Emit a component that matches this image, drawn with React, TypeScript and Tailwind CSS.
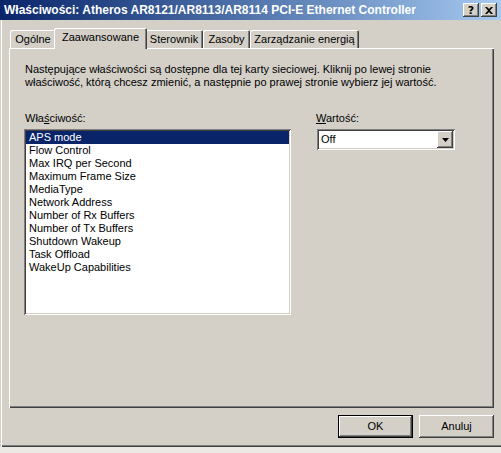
import React from "react";

const raised =
  "shadow-[inset_-1px_-1px_#404040,inset_1px_1px_#ffffff,inset_-2px_-2px_#808080,inset_2px_2px_#d4d0c8]";
const sunken =
  "shadow-[inset_1px_1px_#808080,inset_-1px_-1px_#ffffff,inset_2px_2px_#404040,inset_-2px_-2px_#d4d0c8]";

const tabs = [
  { label: "Ogólne", w: "w-[46px]" },
  { label: "Zaawansowane", w: "w-[93px]", active: true },
  { label: "Sterownik", w: "w-[58px]" },
  { label: "Zasoby", w: "w-[47px]" },
  { label: "Zarządzanie energią", w: "w-[109px]" },
];

const properties = [
  "APS mode",
  "Flow Control",
  "Max IRQ per Second",
  "Maximum Frame Size",
  "MediaType",
  "Network Address",
  "Number of Rx Buffers",
  "Number of Tx Buffers",
  "Shutdown Wakeup",
  "Task Offload",
  "WakeUp Capabilities",
];

function CaptionButton({ children }: { children: React.ReactNode }) {
  return (
    <div className={`w-[16px] h-[14px] bg-[#d4d0c8] flex items-center justify-center ${raised}`}>
      {children}
    </div>
  );
}

function Tab({ label, w, active }: { label: string; w: string; active?: boolean }) {
  if (active) {
    return (
      <div
        className={`relative z-10 -mx-[2px] -mb-px h-[21px] ${w} bg-[#d4d0c8] rounded-t-[2px] flex items-center justify-center pb-[2px] shadow-[inset_1px_1px_#ffffff,inset_-1px_0_#404040,inset_-2px_0_#808080]`}
      >
        {label}
      </div>
    );
  }
  return (
    <div
      className={`h-[18px] ${w} bg-[#d4d0c8] rounded-t-[2px] flex items-center justify-center shadow-[inset_1px_1px_#ffffff,inset_-1px_0_#404040,inset_-2px_0_#808080]`}
    >
      {label}
    </div>
  );
}

function PushButton({ label, isDefault }: { label: string; isDefault?: boolean }) {
  if (isDefault) {
    return (
      <div className="w-[75px] h-[23px] border border-black">
        <div className={`w-full h-full bg-[#d4d0c8] flex items-center justify-center ${raised}`}>
          {label}
        </div>
      </div>
    );
  }
  return (
    <div className={`w-[75px] h-[23px] bg-[#d4d0c8] flex items-center justify-center ${raised}`}>
      {label}
    </div>
  );
}

export default function App() {
  return (
    <div className="w-[501px] h-[453px] bg-[#ece9e4] text-[11px] leading-[13px] text-black font-['Liberation_Sans',Arial,sans-serif] select-none">
      <div className="h-[447px] bg-[#d4d0c8] flex flex-col shadow-[inset_1px_0_#d4d0c8,inset_2px_0_#ffffff,inset_0_-1px_#404040,inset_0_-2px_#808080]">
        {/* caption */}
        <div className="h-[20px] flex items-center pl-[4px] pr-[4px] bg-gradient-to-r from-[#0a246a] to-[#a6caf0]">
          <span className="flex-1 font-bold text-[12px] text-white whitespace-nowrap">
            Właściwości: Atheros AR8121/AR8113/AR8114 PCI-E Ethernet Controller
          </span>
          <div className="flex gap-[2px]">
            <CaptionButton>
              <span className="font-bold text-[11px] leading-none font-['DejaVu_Sans',sans-serif]">?</span>
            </CaptionButton>
            <CaptionButton>
              <svg width="8" height="7" viewBox="0 0 8 7">
                <path d="M0 0h2l2 2 2-2h2L5 3.5 8 7H6L4 5 2 7H0l3-3.5z" fill="#000" />
              </svg>
            </CaptionButton>
          </div>
        </div>

        {/* tab strip + page */}
        <div className="ml-[9px] w-[485px] mt-[8px]">
          <div className="flex items-end h-[20px] pl-px">
            {tabs.map((t) => (
              <Tab key={t.label} {...t} />
            ))}
          </div>
          <div className="h-[360px] pt-[15px] shadow-[inset_1px_1px_#ffffff,inset_-1px_-1px_#404040,inset_-2px_-2px_#808080]">
            <p className="pl-[16px]">
              Następujące właściwości są dostępne dla tej karty sieciowej. Kliknij po lewej stronie
              <br />
              właściwość, którą chcesz zmienić, a następnie po prawej stronie wybierz jej wartość.
            </p>

            <div className="flex mt-[23px] pl-[15px]">
              {/* property list */}
              <div className="flex flex-col">
                <span className="pl-px">
                  Wła<span className="underline">ś</span>ciwość:
                </span>
                <div className={`mt-[4px] w-[267px] h-[186px] bg-white p-[2px] ${sunken}`}>
                  {properties.map((p, i) => (
                    <div
                      key={p}
                      className={`h-[13px] pl-[3px] whitespace-nowrap ${
                        i === 0 ? "bg-[#0a246a] text-white" : ""
                      }`}
                    >
                      {p}
                    </div>
                  ))}
                </div>
              </div>

              {/* value combo */}
              <div className="flex flex-col ml-[26px]">
                <span className="-ml-px">
                  <span className="underline">W</span>artość:
                </span>
                <div className={`mt-[4px] w-[138px] h-[21px] bg-white p-[2px] flex ${sunken}`}>
                  <span className="flex-1 pl-[2px] flex items-center">Off</span>
                  <div className={`w-[16px] h-[17px] bg-[#d4d0c8] flex items-center justify-center ${raised}`}>
                    <svg width="7" height="4" viewBox="0 0 7 4">
                      <path d="M0 0h7L3.5 4z" fill="#000" />
                    </svg>
                  </div>
                </div>
              </div>
            </div>
          </div>

          {/* dialog buttons */}
          <div className="flex justify-end gap-[6px] mt-[7px]">
            <PushButton label="OK" isDefault />
            <PushButton label="Anuluj" />
          </div>
        </div>
      </div>
    </div>
  );
}
